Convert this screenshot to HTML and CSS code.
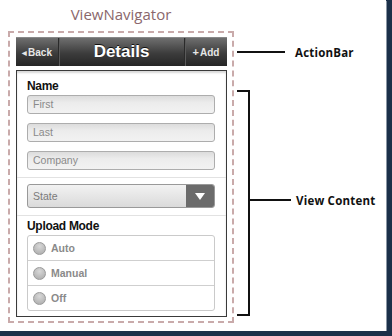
FILE: index.html
```html
<!DOCTYPE html>
<html>
<head>
    <meta charset="utf-8">
    <link rel="stylesheet" href="styles.css">
</head>
<body>
    <div class="page">
        <div class="left">
            <div class="title">ViewNavigator</div>
            <div class="navigator">
                <div class="actionbar">
                    <div class="navbtn back"><span class="tri">&#9664;</span>Back</div>
                    <div class="barTitle">Details</div>
                    <div class="navbtn add"><span class="plus">+</span>Add</div>
                </div>
                <div class="content">
                    <div class="section names">
                        <div class="label">Name</div>
                        <div class="field">First</div>
                        <div class="field">Last</div>
                        <div class="field">Company</div>
                    </div>
                    <div class="section states">
                        <div class="select">
                            <div class="selectText">State</div>
                            <div class="arrow"></div>
                        </div>
                    </div>
                    <div class="section upload">
                        <div class="label">Upload Mode</div>
                        <div class="radios">
                            <div class="radio"><span class="dot"></span>Auto</div>
                            <div class="radio"><span class="dot"></span>Manual</div>
                            <div class="radio"><span class="dot"></span>Off</div>
                        </div>
                    </div>
                </div>
            </div>
        </div>

        <div class="notes">
            <div class="callout bar">
                <div class="line long"></div>
                <div class="noteText">ActionBar</div>
            </div>
            <div class="bracketRow">
                <div class="bracket"></div>
                <div class="callout mid">
                    <div class="line"></div>
                    <div class="noteText">View Content</div>
                </div>
            </div>
        </div>
    </div>
</body>
</html>
```

FILE: styles.css
```css
html, body{
    margin:0px;
    background-color: #1b3049;
    font-family: "Liberation Sans", Arial, sans-serif;
}
.page{
    display: flex;
    width: 386px;
    height: 331px;
    background: #fff;
    box-shadow: 1px 1px 0 #8a96a4;
    overflow: hidden;
}
.left{
    width: 236px;
    flex: 0 0 236px;
}
.title{
    height: 31px;
    padding-left: 8px;
    width: 226px;
    text-align: center;
    line-height: 28px;
    font-family: "Open Sans", sans-serif;
    font-size: 15px;
    color: #8a676c;
}
.navigator{
    margin-left: 8px;
    width: 211px;
    height: 284px;
    border: 2px dashed #c9aaaa;
    padding: 4px 5px 0 6px;
}

/* action bar */
.actionbar{
    display: flex;
    height: 29px;
    background: linear-gradient(#6f6f6f, #3c3c3c 55%, #262626);
    border-top: 1px solid #888;
    box-sizing: border-box;
    color: #fff;
}
.navbtn{
    display: flex;
    align-items: center;
    justify-content: center;
    font-size: 10px;
    font-weight: bold;
    color: #e6e6e6;
}
.back{
    width: 42px;
    border-right: 1px solid #2a2a2a;
    box-shadow: 1px 0 0 #5a5a5a;
}
.add{
    width: 42px;
    border-left: 1px solid #2a2a2a;
    box-shadow: inset 1px 0 0 #5a5a5a;
}
.tri{
    font-size: 6px;
    margin-right: 1px;
}
.plus{
    font-size: 11px;
    margin-right: 1px;
}
.barTitle{
    flex: 1;
    text-align: center;
    line-height: 28px;
    font-size: 17px;
    font-weight: bold;
    text-shadow: 0 -1px 0 #111;
}

/* view content */
.content{
    margin-top: 4px;
    height: 247px;
    border: 1px solid #3a3a3a;
    box-shadow: inset 0 2px 2px #d8d8d8;
    box-sizing: border-box;
    background: #fff;
}
.section{
    padding: 8px 11px 7px 10px;
    border-bottom: 1px solid #e2e2e2;
}
.section.states{
    padding-top: 6px;
}
.section.upload{
    border-bottom: none;
    padding-top: 3px;
    padding-bottom: 0;
}
.label{
    font-size: 12px;
    line-height: 14px;
    font-weight: bold;
    color: #111;
    letter-spacing: -0.3px;
    margin-bottom: 2px;
}
.field{
    height: 19px;
    box-sizing: border-box;
    border: 1px solid #adadad;
    border-radius: 3px;
    background: linear-gradient(#dcdcdc, #ececec 40%, #f2f2f2);
    font-size: 10.5px;
    line-height: 17px;
    padding-left: 5px;
    color: #8a8a8a;
    margin-bottom: 9px;
}
.field:last-child{
    margin-bottom: 0;
}
.select{
    display: flex;
    height: 24px;
    box-sizing: border-box;
    border: 1px solid #999;
    border-radius: 3px;
    overflow: hidden;
    background: linear-gradient(#f2f2f2, #dadada);
}
.selectText{
    flex: 1;
    font-size: 10.5px;
    line-height: 22px;
    padding-left: 5px;
    color: #7a7a7a;
}
.arrow{
    width: 28px;
    background: #6b6b6b;
    display: flex;
    align-items: center;
    justify-content: center;
}
.arrow::after{
    content: "";
    border-left: 5px solid transparent;
    border-right: 5px solid transparent;
    border-top: 7px solid #fff;
}
.radios{
    border: 1px solid #cacaca;
    border-radius: 3px;
}
.radio{
    display: flex;
    align-items: center;
    height: 25px;
    box-sizing: border-box;
    padding-left: 5px;
    border-bottom: 1px solid #cfcfcf;
    font-size: 10.5px;
    font-weight: bold;
    color: #8a8a8a;
}
.radio:last-child{
    border-bottom: none;
    height: 24px;
}
.dot{
    width: 13px;
    height: 13px;
    box-sizing: border-box;
    border-radius: 50%;
    border: 1px solid #9a9a9a;
    background: radial-gradient(circle at 50% 30%, #d8d8d8, #a8a8a8);
    margin-right: 5px;
}

/* annotations */
.notes{
    flex: 1;
    display: flex;
    flex-direction: column;
    padding-top: 45px;
}
.callout{
    display: flex;
    align-items: center;
    height: 14px;
}
.callout.bar{
    margin-left: 1px;
}
.line{
    width: 41px;
    height: 2px;
    background: #111;
}
.line.long{
    width: 48px;
    margin-right: 10px;
}
.noteText{
    font-family: "Open Sans", sans-serif;
    font-weight: bold;
    font-size: 11.5px;
    color: #111;
    letter-spacing: 0.2px;
}
.callout.mid .noteText{
    margin-left: 5px;
}
.bracketRow{
    display: flex;
    align-items: center;
    margin-top: 31px;
}
.bracket{
    width: 13px;
    height: 226px;
    box-sizing: border-box;
    border: 2px solid #111;
    border-left: none;
    margin-left: 1px;
}
.callout.mid{
    margin-bottom: 6px;
}
```
